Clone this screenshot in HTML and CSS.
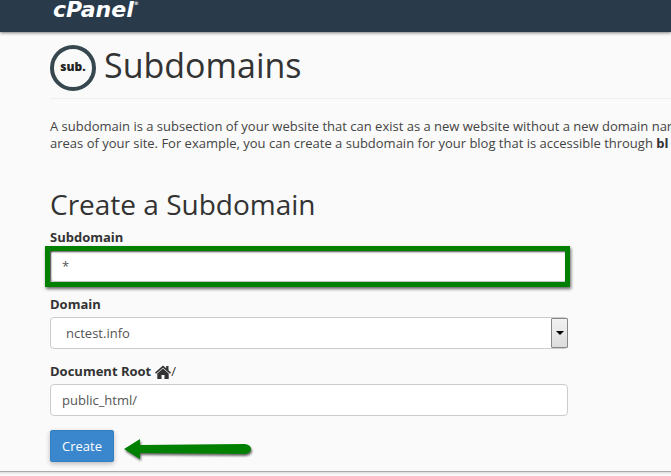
FILE: index.html
```html
<!DOCTYPE html>
<html lang="en">
<head>
  <meta charset="UTF-8">
  <meta name="viewport" content="width=device-width, initial-scale=1.0">
  <title>Subdomains</title>
  <link rel="stylesheet" href="styles.css">
</head>
<body>
  <header class="navbar">
    <a class="logo" href="#">cPanel<sup>&reg;</sup></a>
  </header>

  <main class="content">
    <div class="page-header">
      <span class="page-icon">sub.</span>
      <h1>Subdomains</h1>
    </div>

    <p class="description">
      A subdomain is a subsection of your website that can exist as a new website without a new domain nar<br>
      areas of your site. For example, you can create a subdomain for your blog that is accessible through <strong>bl</strong>
    </p>

    <h2>Create a Subdomain</h2>

    <form class="form">
      <div class="form-group">
        <label for="subdomain">Subdomain</label>
        <div class="field">
          <input type="text" id="subdomain" value="*">
          <span class="highlight"></span>
        </div>
      </div>
      <div class="form-group">
        <label for="domain">Domain</label>
        <div class="field">
          <select id="domain">
            <option>nctest.info</option>
          </select>
          <span class="select-arrow"></span>
        </div>
      </div>
      <div class="form-group">
        <label for="docroot">Document Root
          <svg class="home" viewBox="0 0 16 14" width="16" height="14">
            <path d="M8 0.500 L0 7.500 L1 8.700 L8 2.700 L15 8.700 L16 7.500 L13.500 5.200 V1 H11.200 V3.200 Z"/>
            <path d="M8 3.500 L2.300 8.400 V14 H6.500 V10 H9.500 V14 H13.700 V8.400 Z"/>
          </svg><span class="slash">/</span>
        </label>
        <div class="field">
          <input type="text" id="docroot" value="public_html/">
        </div>
      </div>
      <div class="actions">
        <button type="button" class="btn">Create</button>
        <svg class="arrow" viewBox="0 0 130 22" width="130" height="22">
          <path d="M0 11 L16 1 L16 7 L121 6 Q127 7 127 11 Q127 15 121 16 L16 15 L16 21 Z"/>
        </svg>
      </div>
    </form>
  </main>

  <footer class="footer"></footer>
</body>
</html>
```

FILE: styles.css
```css
* {
  box-sizing: border-box;
}

body {
  margin: 0;
  overflow: hidden;
  background-color: #fafafa;
  color: #444;
  font-family: "Open Sans", sans-serif;
  font-size: 13px;
  line-height: 17px;
}

.navbar {
  display: flex;
  align-items: flex-end;
  height: 32px;
  padding: 0 50px 10px;
  background-color: #293a4a;
  box-shadow: 0 1px 3px rgba(0, 0, 0, 0.5);
}

.logo {
  display: flex;
  padding-left: 3px;
  color: #fff;
  font-family: "DejaVu Sans", sans-serif;
  font-size: 22px;
  font-style: italic;
  font-weight: 700;
  line-height: 24px;
  text-decoration: none;
}

.logo sup {
  font-size: 5px;
  line-height: 10px;
}

.content {
  padding: 13px 0 9px 50px;
}

.page-header {
  display: flex;
  align-items: flex-start;
  gap: 8px;
  padding-bottom: 7px;
  border-bottom: 1px solid #eee;
}

.page-icon {
  width: 46px;
  height: 46px;
  border: 4px solid #36474f;
  border-radius: 50%;
  color: #222;
  font-family: "Open Sans", sans-serif;
  font-size: 12px;
  font-weight: 800;
  line-height: 36px;
  text-align: center;
}

h1,
h2 {
  margin: 0;
  color: #333;
  font-weight: 400;
}

h1 {
  font-size: 34px;
  line-height: 40px;
}

h2 {
  margin-bottom: 7px;
  font-size: 28px;
  line-height: 36px;
}

.description {
  margin: 19px 0 34px;
  white-space: nowrap;
}

strong {
  color: #333;
}

.form {
  max-width: 518px;
}

.form-group {
  margin-bottom: 14px;
}

label {
  display: flex;
  align-items: center;
  height: 17px;
  margin-bottom: 4px;
  color: #333;
  font-weight: 700;
}

.home {
  margin-left: 4px;
  fill: #333;
}

.slash {
  font-weight: 400;
}

.field {
  position: relative;
}

input,
select {
  display: block;
  width: 100%;
  height: 32px;
  margin: 0;
  padding: 0 11px;
  border: 1px solid #ccc;
  border-radius: 4px;
  background-color: #fff;
  color: #555;
  font-family: inherit;
  font-size: 13px;
}

select {
  appearance: none;
  padding: 0 15px;
}

.select-arrow {
  position: absolute;
  top: 1px;
  right: 0;
  bottom: 1px;
  display: flex;
  align-items: center;
  justify-content: center;
  width: 17px;
  border: 1px solid #888;
  border-radius: 1px;
  background: linear-gradient(#f2f2f2, #dcdcdc);
  pointer-events: none;
}

.select-arrow::before {
  content: "";
  border: 4px solid transparent;
  border-top-color: #000;
  border-bottom: 0;
}

/* green marker around the subdomain field */
.highlight {
  position: absolute;
  inset: -4px -2px -5px -5px;
  border: 5px solid #008000;
  box-shadow: 1px 2px 3px rgba(0, 0, 0, 0.6), inset 1px 1px 2px rgba(0, 0, 0, 0.7);
  pointer-events: none;
}

.actions {
  display: flex;
  align-items: center;
  gap: 10px;
}

.btn {
  height: 32px;
  padding: 0 11px;
  border: 1px solid #337fc0;
  border-radius: 2px;
  background-color: #3a87cd;
  box-shadow: 0 2px 5px rgba(0, 0, 0, 0.25);
  color: #fff;
  font-family: inherit;
  font-size: 13px;
}

.arrow {
  margin-top: 6px;
  overflow: visible;
  fill: #008000;
  filter: drop-shadow(1px 2px 1px rgba(0, 0, 0, 0.6));
}

.footer {
  height: 4px;
  border-top: 1px solid #aaa;
  background: linear-gradient(#ddd, #fafafa);
}
```
